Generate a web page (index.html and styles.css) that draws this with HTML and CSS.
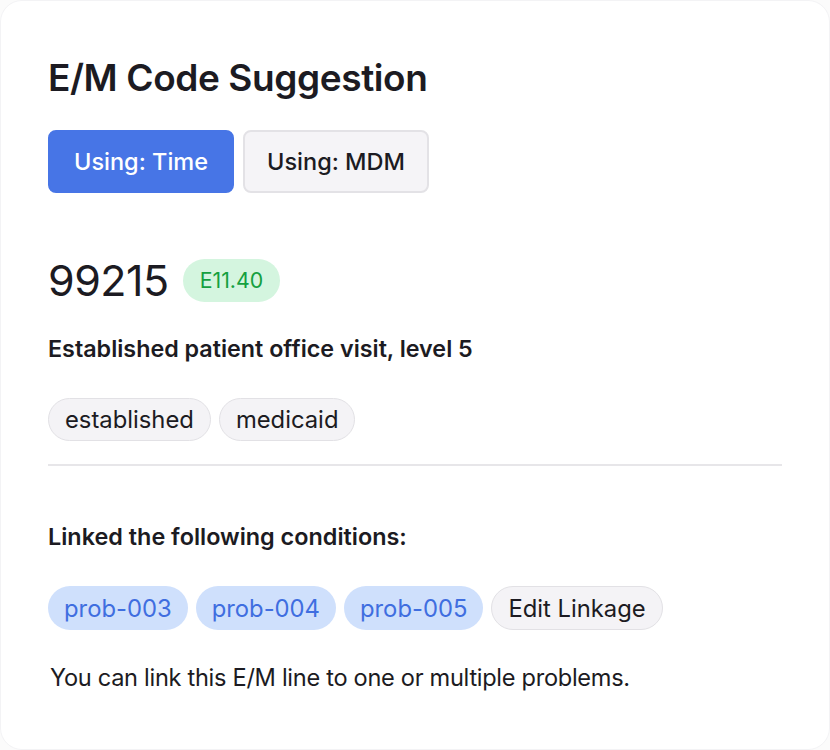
FILE: index.html
```html
<!DOCTYPE html>
<html>
<head>
<meta charset="utf-8">
<link rel="stylesheet" href="styles.css">
</head>
<body>
<div class="card">
  <h1 class="title">E/M Code Suggestion</h1>
  <div class="toggle">
    <button class="btn btn-active">Using: Time</button>
    <button class="btn">Using: MDM</button>
  </div>
  <div class="code-row">
    <span class="code">99215</span>
    <span class="badge">E11.40</span>
  </div>
  <p class="desc">Established patient office visit, level 5</p>
  <div class="tags">
    <span class="tag">established</span>
    <span class="tag">medicaid</span>
  </div>
  <hr class="divider">
  <p class="linked">Linked the following conditions:</p>
  <div class="chips">
    <span class="chip">prob-003</span>
    <span class="chip">prob-004</span>
    <span class="chip">prob-005</span>
    <span class="chip chip-edit">Edit Linkage</span>
  </div>
  <p class="note">You can link this E/M line to one or multiple problems.</p>
</div>
</body>
</html>
```
FILE: styles.css
```css
html, body {
  margin: 0;
  padding: 0;
  background: #fbfbfb;
}
body {
  font-family: Inter, "Noto Sans", sans-serif;
  color: #1c1b22;
}
.card {
  box-sizing: border-box;
  width: 830px;
  height: 750px;
  background: #ffffff;
  border: 1px solid #f3f3f5;
  border-radius: 22px;
  padding: 56px 47px 0 47px;
}
.title {
  margin: 0;
  font-size: 37px;
  font-weight: 600;
  line-height: 42px;
  letter-spacing: -0.4px;
}
.toggle {
  display: flex;
  gap: 9px;
  margin-top: 31px;
}
.btn {
  box-sizing: border-box;
  width: 186px;
  height: 63px;
  border-radius: 8px;
  border: 2px solid #e3e2e6;
  background: #f5f4f7;
  color: #1c1b22;
  font-family: inherit;
  font-size: 23.5px;
  font-weight: 500;
  padding: 0;
}
.btn-active {
  background: #4775e6;
  border-color: #4775e6;
  color: #ffffff;
}
.code-row {
  display: flex;
  align-items: center;
  gap: 14px;
  margin-top: 63px;
}
.code {
  font-size: 43px;
  font-weight: 400;
  line-height: 48px;
  letter-spacing: -0.5px;
}
.badge {
  box-sizing: border-box;
  height: 43px;
  padding: 0 17px;
  border-radius: 22px;
  background: #d4f5df;
  color: #15a040;
  font-size: 21.3px;
  display: inline-flex;
  align-items: center;
}
.desc {
  margin: 31px 0 0 0;
  font-size: 23.3px;
  font-weight: 600;
  line-height: 28px;
}
.tags {
  display: flex;
  gap: 8px;
  margin-top: 35px;
}
.tag {
  box-sizing: border-box;
  height: 43px;
  padding: 0 16px;
  border-radius: 22px;
  border: 1.5px solid #e2e1e5;
  background: #f4f3f6;
  font-size: 23.8px;
  display: inline-flex;
  align-items: center;
}
.divider {
  margin: 23px 0 0 0;
  border: none;
  border-top: 2px solid #e7e6e9;
}
.linked {
  margin: 57px 0 0 0;
  font-size: 23.4px;
  font-weight: 600;
  line-height: 28px;
}
.chips {
  display: flex;
  gap: 8px;
  margin-top: 35px;
}
.chip {
  box-sizing: border-box;
  height: 44px;
  padding: 0 16px;
  border-radius: 22px;
  background: #cfe0fc;
  color: #3f6ee0;
  font-size: 23.8px;
  display: inline-flex;
  align-items: center;
}
.chip-edit {
  background: #f4f3f6;
  border: 1.5px solid #e2e1e5;
  color: #1c1b22;
}
.note {
  margin: 34px 0 0 2px;
  font-size: 23.6px;
  line-height: 28px;
  letter-spacing: -0.3px;
}
```
